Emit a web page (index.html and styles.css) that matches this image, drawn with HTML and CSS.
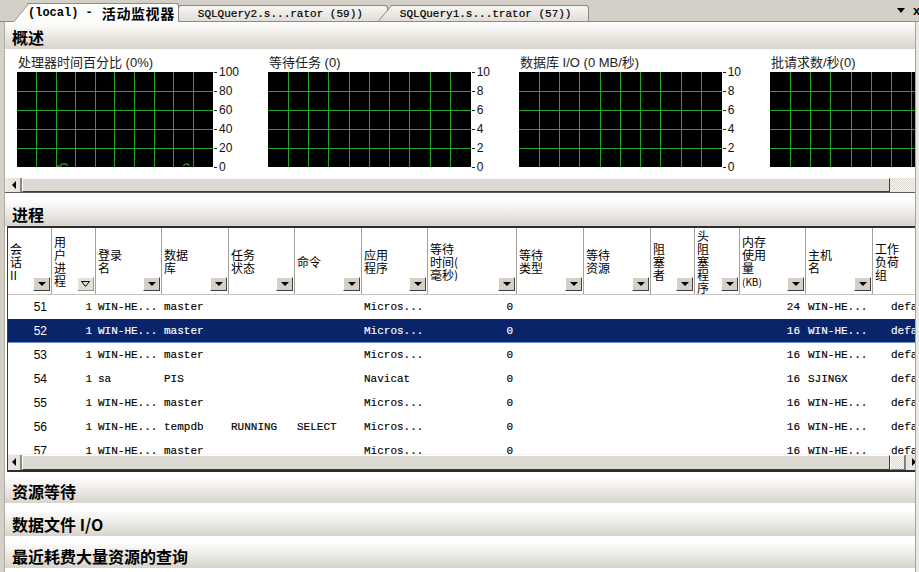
FILE: index.html
```html
<!DOCTYPE html>
<html lang="zh-CN">
<head>
<meta charset="utf-8">
<title>活动监视器</title>
<link rel="stylesheet" href="styles.css">
</head>
<body>
<div class="tabbar">
  <div class="tabs">
    <div class="tab active">(local) -<span class="tcjk">活动监视器</span></div>
    <div class="tab t2">SQLQuery2.s...rator (59))</div>
    <div class="tab t3">SQLQuery1.s...trator (57))</div>
  </div>
  <div class="tabtools">
    <svg class="tdrop" width="8" height="5" viewBox="0 0 8 5"><path d="M0 0H8L4 5Z" fill="#000"/></svg>
    <span class="tclose">x</span>
  </div>
</div>
<div class="main">
  <div class="lstrip"></div>
  <div class="content">
    <div class="sechead first">概述</div>
    <div class="overview">
      <div class="chart">
        <div class="ctitle">处理器时间百分比 (0%)</div>
        <div class="cbody">
          <div class="plot">
            <svg class="grid-lines" viewBox="0 0 10 5" preserveAspectRatio="none"><path d="M1 0V5M2 0V5M3 0V5M4 0V5M5 0V5M6 0V5M7 0V5M8 0V5M9 0V5M0 1H10M0 2H10M0 3H10M0 4H10"/></svg>
            <svg class="trace" viewBox="0 0 198 95" preserveAspectRatio="none"><path d="M40 94H44L45 92H50L51 94M168 94L170 92H173L174 94"/></svg>
          </div>
          <div class="axis"><span>100</span><span>80</span><span>60</span><span>40</span><span>20</span><span>0</span></div>
        </div>
      </div>
      <div class="chart">
        <div class="ctitle">等待任务 (0)</div>
        <div class="cbody">
          <div class="plot">
            <svg class="grid-lines" viewBox="0 0 10 5" preserveAspectRatio="none"><path d="M1 0V5M2 0V5M3 0V5M4 0V5M5 0V5M6 0V5M7 0V5M8 0V5M9 0V5M0 1H10M0 2H10M0 3H10M0 4H10"/></svg>
          </div>
          <div class="axis"><span>10</span><span>8</span><span>6</span><span>4</span><span>2</span><span>0</span></div>
        </div>
      </div>
      <div class="chart">
        <div class="ctitle">数据库 I/O (0 MB/秒)</div>
        <div class="cbody">
          <div class="plot">
            <svg class="grid-lines" viewBox="0 0 10 5" preserveAspectRatio="none"><path d="M1 0V5M2 0V5M3 0V5M4 0V5M5 0V5M6 0V5M7 0V5M8 0V5M9 0V5M0 1H10M0 2H10M0 3H10M0 4H10"/></svg>
          </div>
          <div class="axis"><span>10</span><span>8</span><span>6</span><span>4</span><span>2</span><span>0</span></div>
        </div>
      </div>
      <div class="chart">
        <div class="ctitle">批请求数/秒(0)</div>
        <div class="cbody">
          <div class="plot">
            <svg class="grid-lines" viewBox="0 0 10 5" preserveAspectRatio="none"><path d="M1 0V5M2 0V5M3 0V5M4 0V5M5 0V5M6 0V5M7 0V5M8 0V5M9 0V5M0 1H10M0 2H10M0 3H10M0 4H10"/></svg>
          </div>
          <div class="axis"><span>10</span><span>8</span><span>6</span><span>4</span><span>2</span><span>0</span></div>
        </div>
      </div>
    </div>
    <div class="hscroll ov">
      <div class="sarrow"></div>
      <div class="sthumb"></div>
      <div class="srest"></div>
    </div>

    <div class="sechead">进程</div>
    <div class="pgrid">
      <div class="ghead">
        <div class="hc"><div class="ht">会<br>话<br>II</div><span class="dd"></span></div>
        <div class="hc"><div class="ht">用<br>户<br>进<br>程</div><span class="dd hollow"><svg width="9" height="6" viewBox="0 0 9 6"><path d="M0.5 0.5H8.5L4.5 5.5Z" fill="none" stroke="#000"/></svg></span></div>
        <div class="hc"><div class="ht">登录<br>名</div><span class="dd"></span></div>
        <div class="hc"><div class="ht">数据<br>库</div><span class="dd"></span></div>
        <div class="hc"><div class="ht">任务<br>状态</div><span class="dd"></span></div>
        <div class="hc"><div class="ht">命令</div><span class="dd"></span></div>
        <div class="hc"><div class="ht">应用<br>程序</div><span class="dd"></span></div>
        <div class="hc"><div class="ht">等待<br>时间(<br>毫秒)</div><span class="dd"></span></div>
        <div class="hc"><div class="ht">等待<br>类型</div><span class="dd"></span></div>
        <div class="hc"><div class="ht">等待<br>资源</div><span class="dd"></span></div>
        <div class="hc"><div class="ht">阻<br>塞<br>者</div><span class="dd"></span></div>
        <div class="hc"><div class="ht">头<br>阻<br>塞<br>程<br>序</div><span class="dd"></span></div>
        <div class="hc"><div class="ht">内存<br>使用<br>量<br><span class="kb">(KB)</span></div><span class="dd"></span></div>
        <div class="hc"><div class="ht">主机<br>名</div><span class="dd"></span></div>
        <div class="hc"><div class="ht">工作<br>负荷<br>组</div><span class="dd"></span></div>
      </div>
      <div class="gbody">
        <div class="grow"><span class="n">51</span><span class="r">1</span><span>WIN-HE...</span><span>master</span><span></span><span></span><span>Micros...</span><span class="r">0</span><span></span><span></span><span></span><span></span><span class="r m">24</span><span>WIN-HE...</span><span class="w">default</span></div>
        <div class="grow sel"><span class="n">52</span><span class="r">1</span><span>WIN-HE...</span><span>master</span><span></span><span></span><span>Micros...</span><span class="r">0</span><span></span><span></span><span></span><span></span><span class="r m">16</span><span>WIN-HE...</span><span class="w">default</span></div>
        <div class="grow"><span class="n">53</span><span class="r">1</span><span>WIN-HE...</span><span>master</span><span></span><span></span><span>Micros...</span><span class="r">0</span><span></span><span></span><span></span><span></span><span class="r m">16</span><span>WIN-HE...</span><span class="w">default</span></div>
        <div class="grow"><span class="n">54</span><span class="r">1</span><span>sa</span><span>PIS</span><span></span><span></span><span>Navicat</span><span class="r">0</span><span></span><span></span><span></span><span></span><span class="r m">16</span><span>SJINGX</span><span class="w">default</span></div>
        <div class="grow"><span class="n">55</span><span class="r">1</span><span>WIN-HE...</span><span>master</span><span></span><span></span><span>Micros...</span><span class="r">0</span><span></span><span></span><span></span><span></span><span class="r m">16</span><span>WIN-HE...</span><span class="w">default</span></div>
        <div class="grow"><span class="n">56</span><span class="r">1</span><span>WIN-HE...</span><span>tempdb</span><span>RUNNING</span><span>SELECT</span><span>Micros...</span><span class="r">0</span><span></span><span></span><span></span><span></span><span class="r m">16</span><span>WIN-HE...</span><span class="w">default</span></div>
        <div class="grow"><span class="n">57</span><span class="r">1</span><span>WIN-HE...</span><span>master</span><span></span><span></span><span>Micros...</span><span class="r">0</span><span></span><span></span><span></span><span></span><span class="r m">16</span><span>WIN-HE...</span><span class="w">default</span></div>
      </div>
      <div class="hscroll gs">
        <div class="sarrow"></div>
        <div class="sthumb"></div>
        <div class="sbox"></div>
        <div class="sarrow right"></div>
      </div>
    </div>

    <div class="sechead coll c1">资源等待</div>
    <div class="sechead coll c2">数据文件 I/O</div>
    <div class="sechead coll c3">最近耗费大量资源的查询</div>
  </div>
  <div class="vscroll"></div>
</div>
</body>
</html>
```

FILE: styles.css
```css
* { box-sizing: border-box; }
html, body { margin: 0; padding: 0; }
body {
  width: 919px;
  height: 572px;
  overflow: hidden;
  background: #fff;
  color: #000;
  font-family: "Liberation Sans", "Noto Sans CJK SC", sans-serif;
}

/* ---------- tab strip ---------- */
.tabbar {
  height: 22px;
  background: #d4d0c8;
  border-bottom: 1px solid #8d8b86;
  display: flex;
  align-items: flex-end;
}
.tabs {
  flex: 1;
  display: flex;
  align-items: flex-end;
  padding-left: 27px;
}
.tab {
  position: relative;
  z-index: 1;
  height: 16px;
  display: flex;
  align-items: center;
  white-space: nowrap;
  font-family: "Liberation Mono", monospace;
  font-size: 11px;
  -webkit-text-stroke: 0.2px #000;
  background: linear-gradient(#f8f7f4, #e0ddd6);
  border-top: 1px solid #8d8b86;
  border-right: 1px solid #8d8b86;
  border-top-right-radius: 3px;
}
.tab::before {
  content: "";
  position: absolute;
  left: -14px;
  top: -1px;
  bottom: 0;
  width: 22px;
  background: inherit;
  border-top: 1px solid #8d8b86;
  border-left: 1px solid #8d8b86;
  transform: skewX(-40deg);
  transform-origin: 0 100%;
  z-index: -1;
}
.tab.active {
  z-index: 3;
  height: 19px;
  margin-bottom: -1px;
  padding: 0 3px 1px 1px;
  background: #fcfcfb;
  font-weight: bold;
  font-size: 12px;
  -webkit-text-stroke: 0;
}
.tcjk {
  font-family: "Noto Sans CJK SC", sans-serif;
  font-size: 14px;
  font-weight: bold;
  letter-spacing: 0.6px;
  margin-left: 9px;
}
.tab.t2 { margin-left: 2px; padding: 0 24px 0 17px; }
.tab.t3 { z-index: 2; margin-left: 4px; padding: 0 17px 0 8px; }
.tabtools {
  width: 22px;
  height: 21px;
  display: flex;
  align-items: center;
  flex: none;
}
.tdrop { flex: none; }
.tclose {
  margin-left: 8px;
  font-family: "Liberation Sans", sans-serif;
  font-weight: bold;
  font-size: 13px;
}

/* ---------- main area ---------- */
.main { display: flex; height: 550px; }
.lstrip {
  width: 5px;
  flex: none;
  background: #d4d0c8;
  border-right: 1px solid #aeaba4;
}
.content {
  width: 910px;
  flex: none;
  overflow: hidden;
}
.vscroll {
  width: 4px;
  flex: none;
  background: #ebe9e3;
  border-left: 1px solid #a6a39c;
}

.sechead {
  height: 26px;
  display: flex;
  align-items: center;
  padding: 1px 0 0 7px;
  font-family: "Noto Sans CJK SC", sans-serif;
  font-weight: bold;
  font-size: 16px;
  white-space: nowrap;
  background: linear-gradient(#fefefe 0%, #f2f0ec 35%, #d7d4cd 100%);
}
.sechead.first { height: 27px; padding-top: 2px; }
.sechead.c1 { margin-top: 5px; }
.sechead.c2 { margin-top: 7px; }
.sechead.c3 { margin-top: 6px; }

/* ---------- overview charts ---------- */
.overview {
  height: 128px;
  display: flex;
  padding: 7px 0 0 12px;
}
.chart {
  flex: none;
  width: 251px;
  padding-right: 29px;
}
.ctitle {
  height: 14px;
  line-height: 14px;
  font-size: 13px;
  padding-left: 1px;
  white-space: nowrap;
  color: #222;
}
.cbody { display: flex; margin-top: 2px; }
.plot {
  position: relative;
  flex: 1;
  height: 95px;
  background: #000;
}
.grid-lines, .trace {
  position: absolute;
  left: 0;
  top: 0;
  width: 100%;
  height: 100%;
}
.grid-lines path {
  stroke: #27a527;
  stroke-width: 1;
  vector-effect: non-scaling-stroke;
  shape-rendering: crispEdges;
  fill: none;
}
.trace path {
  stroke: #3fcf3f;
  stroke-width: 1;
  vector-effect: non-scaling-stroke;
  fill: none;
}
.axis {
  flex: none;
  height: 107px;
  margin-top: -6px;
  display: flex;
  flex-direction: column;
  justify-content: space-between;
  font-size: 12px;
  line-height: 12px;
  color: #111;
}
.axis span { display: flex; align-items: center; white-space: nowrap; }
.axis span::before {
  content: "";
  width: 3px;
  height: 1px;
  background: #222;
  margin: 0 2px 0 1px;
}

/* ---------- scrollbars ---------- */
.hscroll {
  display: flex;
  height: 16px;
  background: #ecebe6;
  border-top: 1px solid #fff;
}
.hscroll.ov {
  padding-left: 3px;
  border-bottom: 1px solid #5f5d59;
  margin-bottom: 7px;
}
.sarrow {
  position: relative;
  width: 14px;
  flex: none;
  background: #e6e4de;
  border-right: 2px solid #8a8883;
}
.sarrow::after {
  content: "";
  position: absolute;
  left: 4px;
  top: 3px;
  border-top: 4px solid transparent;
  border-bottom: 4px solid transparent;
  border-right: 4px solid #000;
}
.sarrow.right { border-right: none; border-left: 1px solid #8a8883; }
.sarrow.right::after {
  left: 6px;
  border-right: none;
  border-left: 4px solid #000;
}
.sthumb {
  width: 868px;
  flex: none;
  background: #dcd9d2;
  border: 1px solid;
  border-color: #fff #3c3c3c #3c3c3c #fff;
}
.srest, .sbox {
  background: repeating-conic-gradient(#f5f4f0 0 25%, #dedbd4 0 50%) 0 0 / 2px 2px;
}
.srest { flex: 1; }
.sbox {
  width: 15px;
  flex: none;
  border: 1px solid;
  border-color: #fff #7a7873 #7a7873 #fff;
}

/* ---------- process grid ---------- */
.pgrid {
  margin-left: 2px;
  border-top: 2px solid #2e2e2e;
  border-left: 1px solid #3a3a3a;
  border-bottom: 2px solid #2e2e2e;
  overflow: hidden;
}
.ghead, .grow {
  display: grid;
  grid-template-columns: 44px 44px 66px 67px 66px 67px 66px 89px 67px 67px 44px 45px 66px 67px 80px;
}
.ghead {
  height: 67px;
  border-bottom: 1px solid #c4c3be;
  background: #fff;
}
.hc {
  display: flex;
  align-items: center;
  padding-left: 2px;
  border-right: 1px solid #a3a29c;
  min-width: 0;
}
.ht {
  flex: 1;
  min-width: 0;
  font-family: "Noto Sans CJK SC", sans-serif;
  font-size: 12px;
  line-height: 13px;
  white-space: nowrap;
  overflow: hidden;
  color: #000;
}
.kb { font-size: 10px; }
.dd {
  align-self: flex-end;
  flex: none;
  width: 17px;
  height: 14px;
  margin: 0 1px 3px 0;
  display: flex;
  align-items: center;
  justify-content: center;
  background: #d4d0c8;
  border: 1px solid;
  border-color: #fff #404040 #404040 #fff;
}
.dd::after {
  content: "";
  border-left: 4px solid transparent;
  border-right: 4px solid transparent;
  border-top: 4px solid #000;
}
.dd.hollow { background: #e2dfd8; border-color: #fff #9a9893 #9a9893 #fff; }
.dd.hollow::after { display: none; }

.gbody {
  height: 159px;
  overflow: hidden;
}
.grow {
  height: 24px;
  line-height: 24px;
  font-family: "Liberation Mono", monospace;
  font-size: 11px;
  -webkit-text-stroke: 0.15px currentColor;
  white-space: nowrap;
}
.grow > span { overflow: hidden; padding-left: 2px; }
.grow > span.r { text-align: right; padding: 0 4px 0 0; }
.grow > span.m { padding-right: 6px; }
.grow > span.n {
  text-align: right;
  padding: 0 5px 0 0;
  font-family: "Liberation Sans", sans-serif;
  font-size: 12px;
  -webkit-text-stroke: 0;
}
.grow > span.w { padding-left: 18px; overflow: visible; }
.grow.sel {
  background: #0a246a;
  color: #fff;
  box-shadow: inset 0 -1px 0 #6f8fc7;
}
.hscroll.gs { border-top: 1px solid #f4f3ef; }
```
